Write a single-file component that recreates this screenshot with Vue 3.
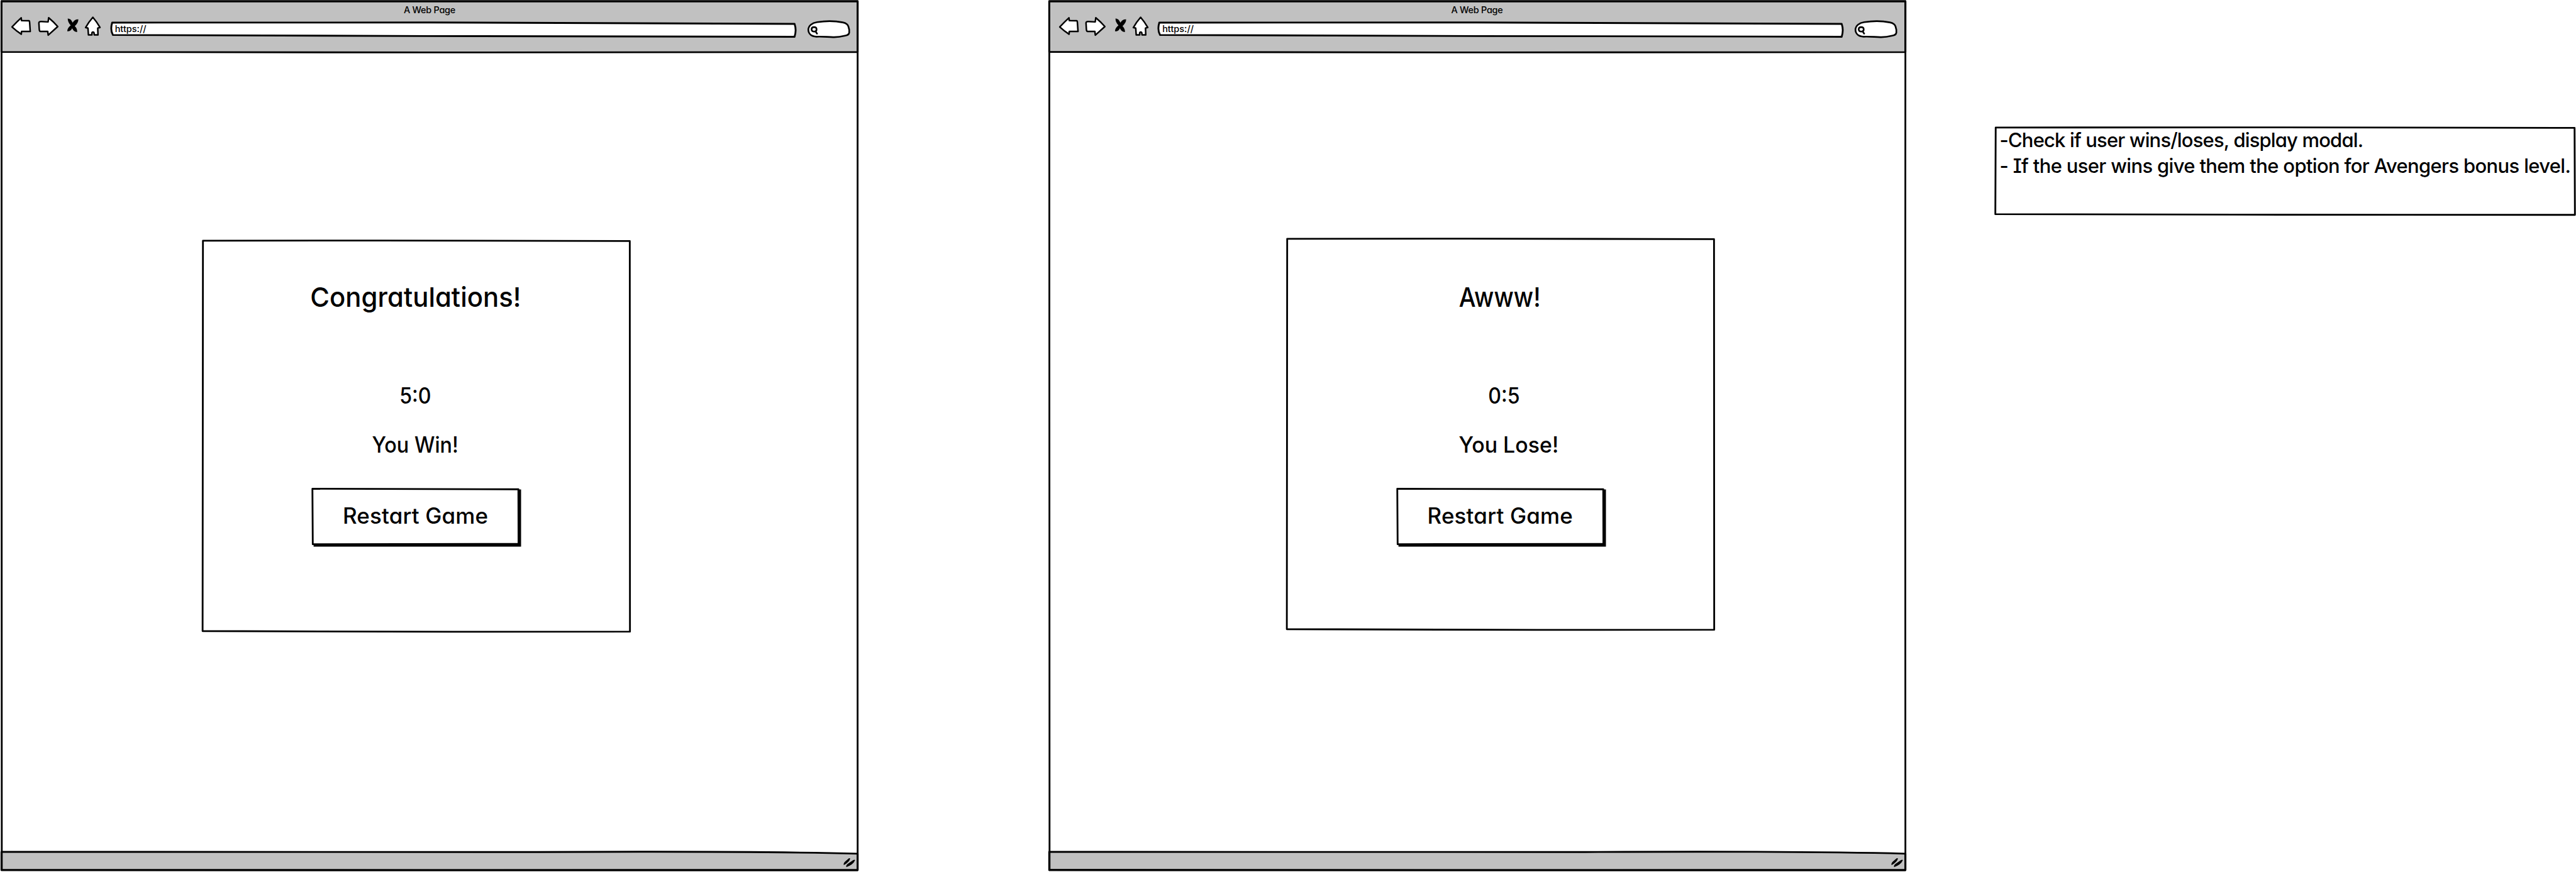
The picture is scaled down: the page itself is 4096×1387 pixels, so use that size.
<script setup>
const windows = [
  { id: 'win', title: 'Congratulations!', score: '5:0', message: 'You Win!' },
  { id: 'lose', title: 'Awww!', score: '0:5', message: 'You Lose!' },
]
const notes = [
  '-Check if user wins/loses, display modal.',
  '- If the user wins give them the option for Avengers bonus level.',
]
</script>

<template>
  <div class="board">
    <section v-for="w in windows" :key="w.id" class="browser" :class="w.id">
      <svg class="ink" viewBox="0 0 2400 2436.7">
        <path class="bar" d="M4 3.5H2396V145.5L1200 146.5L4 145Z" />
        <path class="bar" d="M4 2380.5Q900 2384 1500 2381Q2100 2378 2396 2385.5V2431.5H4Z" />
        <path class="line" d="M4.3 3.5H2396L2395.6 1200L2396 2431.5L1200 2431.7L5 2431Q4 1800 4.6 1200Z" />
      </svg>
      <header class="chrome">
        <div class="page-title">A Web Page</div>
        <div class="tools">
          <svg class="back" viewBox="90 132 175 176"><path d="M101 226Q140 185 178 150L181 173L243 174Q248 174 249 190L254 264L181 264L179 287Q140 262 101 226Z" /></svg>
          <svg class="forward" viewBox="310 132 185 176"><path d="M325 192Q325 180 345 181L402 184L407 149Q445 180 483 223L403 295L399 264L338 264Q329 264 328 245Z" /></svg>
          <svg class="stop" viewBox="560 132 105 176"><path d="M569 156Q595 155 610 190Q628 160 658 162Q660 190 628 219Q650 240 648 269Q622 270 606 238Q595 265 565 263Q563 240 594 213Q568 185 569 156Z" /></svg>
          <svg class="home" viewBox="708 132 145 176"><path d="M780 145Q812 182 840 230L821 236L823 293H792L790 278Q789 269 781 269Q773 269 772 278V293H743L739 236L719 231Q745 185 780 145Z" /></svg>
          <div class="url">
            <svg class="ink" viewBox="307 60 1920 48"><path d="M312 63.5L1200 63L2220 67Q2226 84 2220 103L1200 101L314 98Q306 84 312 63.5Z" /></svg>
            <span>https://</span>
          </div>
          <svg class="search" viewBox="460 132 370 190">
            <path d="M540 308C500 306 472 285 472 250C472 215 505 192 545 186C610 176 700 176 760 188C790 194 802 203 808 222C816 245 817 262 815 275C812 292 800 295 780 300C740 310 720 313 680 312C630 311 600 306 540 308Z" />
            <path d="M519 228C533 228 541 236 541 247C541 258 535 265 524 265C508 266 499 259 499 247C499 236 507 228 519 228ZM534 266L545 282" />
          </svg>
        </div>
      </header>
      <main class="page">
        <div class="modal">
          <svg class="ink" viewBox="0 0 1199 1098"><path d="M3 3L500 2.5L1195.5 4Q1198 500 1196 1095.5L700 1096L2 1094Q4 500 3 3Z" /></svg>
          <h1>{{ w.title }}</h1>
          <p class="score">{{ w.score }}</p>
          <p class="message">{{ w.message }}</p>
          <button type="button">
            <svg class="ink" viewBox="0 0 586 164.3">
              <path class="shade" d="M6.3 4.3H586V164.3H6.3Z" />
              <path d="M3 2.5L578.5 4L579 156.5L4 157.5Z" />
            </svg>
            <span>Restart Game</span>
          </button>
        </div>
      </main>
      <footer>
        <svg class="grip" viewBox="468 170 100 84"><path d="M514 177Q523 172 525 180Q515 210 472 233Q466 220 482 204ZM551 191Q565 186 566 192Q550 230 493 250Q488 238 503 224Z" /></svg>
      </footer>
    </section>

    <aside class="note">
      <svg class="ink" viewBox="0 0 1625 252"><path d="M4 5L800 4.5L1621 6L1622 249L800 248.5L3 247Z" /></svg>
      <p v-for="n in notes" :key="n">{{ n }}</p>
    </aside>
  </div>
</template>

<style>
body { background: #fff; }
</style>

<style scoped>
.board {
  position: relative;
  width: 4096px;
  height: 1387px;
  overflow: hidden;
  color: #000;
  font-family: Inter, "Liberation Sans", sans-serif;
  font-feature-settings: "cv11", "cv08";
  font-weight: 500;
}
svg { display: block; fill: #fff; stroke: #000; stroke-linejoin: round; stroke-linecap: round; overflow: visible; }
.ink { position: absolute; inset: 0; width: 100%; height: 100%; stroke-width: 5; }
.browser { position: absolute; top: 0; left: 0; width: 1366px; height: 1387px; display: flex; flex-direction: column; }
.browser.lose { left: 1665.5px; }
.bar { fill: #c1c1c1; }
.line { fill: none; }
.chrome { position: relative; height: 83px; }
.page-title { height: 25px; line-height: 31px; font-size: 14.5px; letter-spacing: -0.3px; text-align: center; }
.tools { display: flex; height: 33.4px; padding-left: 17.1px; }
.tools > svg { flex: none; height: 33.4px; stroke-width: 13; }
.back { width: 33.2px; }
.forward { width: 35.1px; margin-left: 8.5px; }
.stop { width: 19.9px; margin-left: 12.4px; fill: #000; }
.tools > .stop { stroke: none; }
.home { width: 27.5px; margin-left: 8.1px; }
.url { position: relative; flex: none; width: 1092.9px; height: 27.3px; margin: 9.1px 0 0 12.9px; padding-left: 8px; box-sizing: border-box; line-height: 24px; font-size: 14.5px; }
.url span { position: relative; }
.tools > .search { width: 70.2px; height: 36px; margin-left: 15px; stroke-width: 14; }
.page { flex: 1; display: flex; align-items: flex-start; }
.modal { position: relative; width: 682.4px; height: 625.2px; margin: 297.6px 0 0 320.5px; padding-top: 61.1px; box-sizing: border-box; display: flex; flex-direction: column; align-items: center; }
.lose .modal { margin: 295.2px 0 0 379.7px; padding-top: 63.5px; }
h1, p { position: relative; margin: 0; font-weight: 500; white-space: nowrap; }
h1 { font-size: 43px; line-height: 60px; margin-right: 2px; transform: scaleX(0.975); }
.score, .message, button { font-size: 35px; line-height: 50px; }
.score { margin-top: 102.6px; margin-right: 2.6px; transform: scaleX(0.92); }
.message { margin-top: 27.5px; margin-right: 2.6px; transform: scaleX(0.925); }
.lose h1 { margin-right: 3.6px; transform: scaleX(0.88); }
.lose .score { margin-left: 9.8px; margin-right: 0; }
.lose .message { margin-left: 25.2px; margin-right: 0; transform: scaleX(0.97); }
button { position: relative; width: 333.6px; height: 93.5px; margin-top: 43.9px; padding: 19.7px 2.2px 0 0; box-sizing: border-box; border: 0; background: none; color: inherit; font-family: inherit; font-feature-settings: inherit; font-weight: 500; letter-spacing: 0.15px; display: flex; justify-content: center; align-items: flex-start; }
button span { position: relative; }
.shade { fill: #000; stroke: none; }
footer { position: relative; height: 31px; display: flex; justify-content: flex-end; padding: 8.2px 6px 0 0; box-sizing: border-box; }
.grip { width: 19px; height: 16px; fill: #000; stroke: none; }
.note { position: absolute; left: 3170.5px; top: 200.4px; width: 925px; height: 143.5px; padding: 1.6px 0 0 9px; box-sizing: border-box; font-size: 31px; line-height: 41px; letter-spacing: -0.67px; }
.note p:first-of-type { letter-spacing: -0.85px; }
</style>
